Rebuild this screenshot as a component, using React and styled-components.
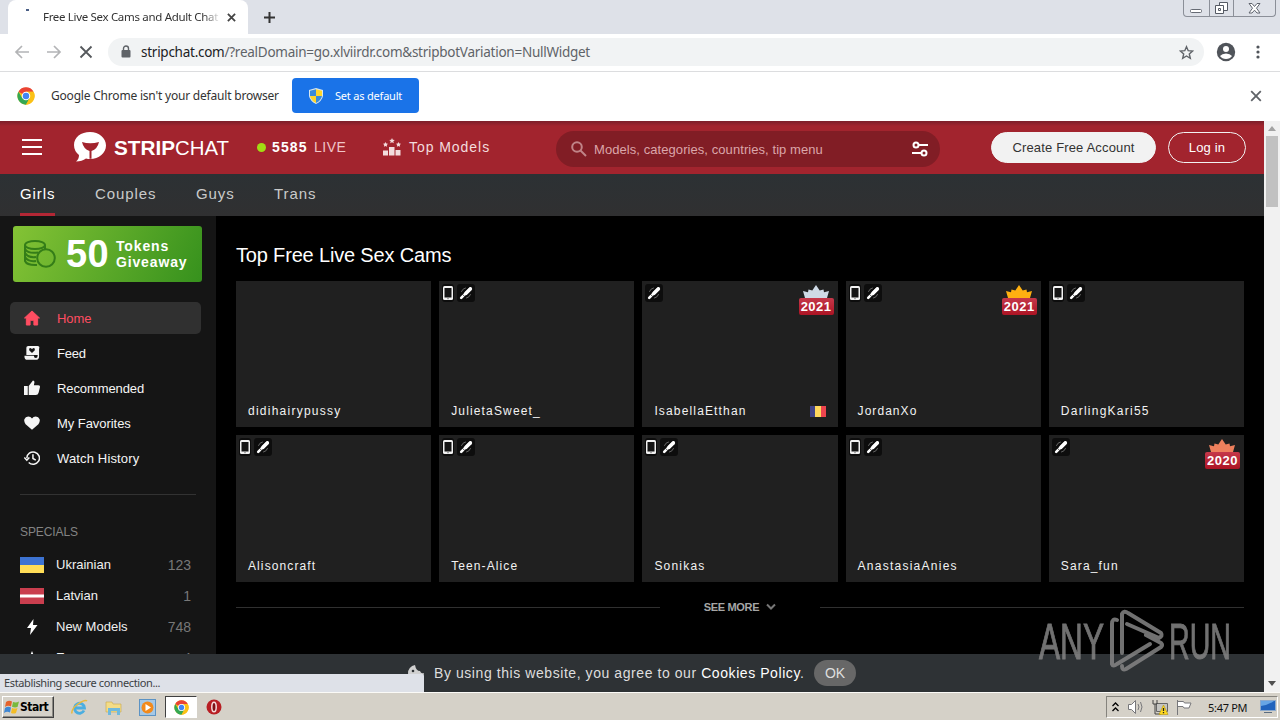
import styled, { createGlobalStyle } from 'styled-components';

const GlobalStyle = createGlobalStyle`
  * {
    box-sizing: border-box;
  }

  body {
    margin: 0;
    overflow: hidden;
  }

  svg {
    display: block;
    flex: none;
  }
`;

const UI_FONT = '"Noto Sans", "DejaVu Sans", sans-serif';
const SITE_FONT = '"Liberation Sans", Arial, sans-serif';

const Screen = styled.div`
  position: relative;
  display: flex;
  flex-direction: column;
  width: 1280px;
  height: 720px;
  overflow: hidden;
  background: #fff;
  font-family: ${UI_FONT};
`;

const Label = styled.span`
  flex: none;
  display: block;
  white-space: nowrap;
  width: ${({ $width }) => ($width ? `${$width}px` : 'auto')};
  margin-left: ${({ $left = 0 }) => $left}px;
  font-size: ${({ $size = 14 }) => $size}px;
  font-weight: ${({ $weight = 400 }) => $weight};
  letter-spacing: ${({ $spacing = 0 }) => $spacing}px;
  color: ${({ $color = '#fff' }) => $color};
`;

/* ---------- browser ---------- */

const TabStrip = styled.div`
  flex: none;
  display: flex;
  height: 34px;
  padding-left: 8px;
  background: #dee1e8;
`;

const Tab = styled.div`
  display: flex;
  align-items: center;
  width: 240px;
  height: 34px;
  background: #fff;
  border-radius: 8px 8px 0 0;
`;

const Spinner = styled.div`
  align-self: flex-start;
  width: 3px;
  height: 2px;
  margin: 9px 0 0 18px;
  background: #4b5f86;
`;

const TabTitle = styled.div`
  width: 176px;
  margin: -1px 0 0 14px;
  white-space: nowrap;
  font-size: 11.5px;
  letter-spacing: -0.32px;
  color: #333;
  mask-image: linear-gradient(to right, #000 160px, transparent 178px);
`;

const NewTab = styled.div`
  display: flex;
  align-items: center;
  margin-left: 15px;
`;

const WindowButtons = styled.div`
  display: flex;
  width: 93px;
  height: 17px;
  margin: 0 4px 0 auto;
  border: 1px solid #8b8f98;
  border-top: 0;
  border-radius: 0 0 4px 4px;
`;

const WindowButton = styled.div`
  display: flex;
  align-items: center;
  justify-content: center;
  width: ${({ $width }) => $width}px;
  border-right: ${({ $last }) => ($last ? 0 : '1px solid #8b8f98')};
`;

const Toolbar = styled.div`
  flex: none;
  display: flex;
  align-items: center;
  height: 38px;
  padding: 0 0 1px 14px;
  border-bottom: 1px solid #dcdddf;
`;

const NavIcons = styled.div`
  display: flex;
  gap: 16px;
`;

const AddressBar = styled.div`
  display: flex;
  align-items: center;
  width: 1096px;
  height: 28px;
  margin: 0 12px 0 14px;
  padding: 0 10px 0 13px;
  border-radius: 14px;
  background: #f1f3f4;
`;

const Url = styled.div`
  margin: -1px auto 0 10px;
  font-size: 13.5px;
  letter-spacing: -0.26px;
  color: #5f6368;

  & b {
    font-weight: 400;
    color: #202124;
  }
`;

const InfoBar = styled.div`
  flex: none;
  display: flex;
  align-items: center;
  height: 49px;
  padding: 0 18px 2px 17px;
`;

const DefaultButton = styled.div`
  display: flex;
  align-items: center;
  width: 127px;
  height: 35px;
  margin: 0 auto 0 12px;
  padding-left: 16px;
  border-radius: 4px;
  background: #1a73e8;
`;

/* ---------- page ---------- */

const Viewport = styled.div`
  position: relative;
  flex: none;
  display: flex;
  height: 571px;
  font-family: ${SITE_FONT};
`;

const Page = styled.div`
  width: 1264px;
  background: #000;
`;

const Header = styled.header`
  display: flex;
  height: 53px;
  padding: 0 18px 1px 22px;
  align-items: center;
  background: linear-gradient(#7b1f2a, #a2242e 5px);
`;

const Dot = styled.i`
  flex: none;
  width: 9px;
  height: 9px;
  margin: 0 6px 0 26px;
  border-radius: 50%;
  background: #a2dc13;
`;

const Search = styled.div`
  flex: none;
  display: flex;
  align-items: center;
  width: 384px;
  height: 36px;
  margin: 4px 0 0 66px;
  padding: 0 12px 0 15px;
  border-radius: 18px;
  background: #811d25;
`;

const Pill = styled.div`
  flex: none;
  display: flex;
  align-items: center;
  justify-content: center;
  white-space: nowrap;
  width: ${({ $width }) => $width}px;
  height: 31px;
  margin-left: ${({ $left }) => $left}px;
  border: 1px solid #f2f2f2;
  border-radius: 16px;
  background: ${({ $filled }) => ($filled ? '#f2f2f2' : 'transparent')};
  color: ${({ $filled }) => ($filled ? '#333' : '#fff')};
  font-size: 13px;
  letter-spacing: 0.15px;
`;

const Tabs = styled.nav`
  display: flex;
  height: 42px;
  padding-left: 20px;
  background: linear-gradient(#2c3134, #303031);
`;

const TabLink = styled.div`
  height: 42px;
  width: ${({ $width }) => $width}px;
  margin-right: 40px;
  border-bottom: 3px solid ${({ $active }) => ($active ? '#b32735' : 'transparent')};
  font-size: 15px;
  line-height: 39px;
  letter-spacing: 0.9px;
  white-space: nowrap;
  color: ${({ $active }) => ($active ? '#fff' : '#c9caca')};
`;

const Columns = styled.div`
  display: flex;
  height: 476px;
`;

const Sidebar = styled.aside`
  width: 216px;
  padding-top: 10px;
  background: #151515;
  overflow: hidden;
`;

const Giveaway = styled.div`
  display: flex;
  align-items: center;
  width: 189px;
  height: 56px;
  margin: 0 0 20px 13px;
  padding-left: 10px;
  border-radius: 3px;
  background: linear-gradient(115deg, #84c335, #36911d);
`;

const GiveawayText = styled.div`
  margin-left: 7px;
  font-size: 14px;
  font-weight: 700;
  line-height: 16px;
  letter-spacing: 0.85px;
  color: #fff;
`;

const MenuItem = styled.div`
  display: flex;
  align-items: center;
  gap: 17px;
  width: 191px;
  height: 32px;
  margin: 0 0 3px 10px;
  padding-left: 14px;
  border-radius: 5px;
  background: ${({ $active }) => ($active ? '#303030' : 'transparent')};
  color: ${({ $active }) => ($active ? '#ff4d61' : '#f5f5f5')};
  font-size: 13px;
  letter-spacing: ${({ $spacing = 0 }) => $spacing}px;
  white-space: nowrap;
`;

const SideRule = styled.div`
  height: 1px;
  margin: 20px 20px 30px;
  background: #323232;
`;

const SpecialsTitle = styled.div`
  height: 16px;
  margin: 0 0 8px 20px;
  font-size: 12px;
  line-height: 15px;
  letter-spacing: -0.1px;
  color: #838383;
`;

const Special = styled.div`
  display: flex;
  align-items: center;
  height: 31px;
  padding: 0 25px 0 20px;
  font-size: 13px;
  white-space: nowrap;
  color: #f0f0f0;

  & em {
    margin-left: auto;
    font-size: 14px;
    font-style: normal;
    color: #787878;
  }
`;

const SpecialIcon = styled.div`
  display: flex;
  justify-content: center;
  width: 24px;
  margin-right: 12px;
`;

const Main = styled.main`
  width: 1048px;
  padding: 25px 20px 0;
`;

const Title = styled.h1`
  height: 28px;
  margin: 0 0 12px;
  font-size: 20px;
  font-weight: 400;
  line-height: 28px;
  letter-spacing: -0.17px;
  color: #fff;
`;

const Grid = styled.div`
  display: grid;
  grid-template-columns: repeat(5, 1fr);
  grid-auto-rows: 146.4px;
  gap: 8px;
`;

const Card = styled.div`
  display: flex;
  flex-direction: column;
  justify-content: space-between;
  background: #202020;
`;

const CardTop = styled.div`
  display: flex;
  justify-content: space-between;
  padding: 3px 4px 0 3px;
`;

const Badges = styled.div`
  display: flex;
  gap: 3px;
`;

const Badge = styled.div`
  display: flex;
  align-items: center;
  justify-content: center;
  width: ${({ $width }) => $width}px;
  height: 18px;
  border-radius: 3px;
  background: #0d0d0d;
`;

const Award = styled.div`
  display: flex;
  flex-direction: column;
  align-items: center;
  margin-top: 1px;
`;

const Year = styled.div`
  width: 35px;
  height: 17px;
  border-radius: 2px;
  background: linear-gradient(#c5384a, #ac1424);
  color: #fff;
  font-size: 13px;
  font-weight: 700;
  line-height: 17px;
  letter-spacing: 0.5px;
  text-align: center;
`;

const CardBottom = styled.div`
  display: flex;
  justify-content: space-between;
  align-items: center;
  height: 16px;
  padding: 0 12px;
  margin-bottom: 8px;
  color: #f2f2f2;
  font-size: 12px;
  letter-spacing: ${({ $spacing = 1 }) => $spacing}px;
`;

const SeeMore = styled.div`
  display: flex;
  align-items: center;
  justify-content: space-between;
  height: 16px;
  margin-top: 17px;
`;

const Rule = styled.div`
  width: 424px;
  height: 1px;
  margin-top: 1px;
  background: #303030;
`;

const SeeMoreLabel = styled.div`
  display: flex;
  align-items: center;
  gap: 7px;
  color: #a6a6a6;
  font-size: 11px;
  font-weight: 700;
  letter-spacing: -0.35px;
`;

const CookieBar = styled.div`
  position: absolute;
  left: 0;
  bottom: 0;
  display: flex;
  align-items: center;
  width: 1264px;
  height: 38px;
  padding-left: 407px;
  background: #2e3235;
  white-space: nowrap;
  font-size: 14px;
  color: #dedede;

  & b {
    font-weight: 400;
    color: #fff;
  }
`;

const OkButton = styled.div`
  width: 42px;
  height: 26px;
  margin-left: 9px;
  border-radius: 13px;
  background: #676767;
  line-height: 26px;
  text-align: center;
`;

const StatusBubble = styled.div`
  position: absolute;
  left: 0;
  bottom: 0;
  width: 424px;
  height: 18px;
  padding-left: 4px;
  border-radius: 0 2px 0 0;
  background: #dee1e8;
  font-family: ${UI_FONT};
  font-size: 11px;
  line-height: 18px;
  letter-spacing: -0.37px;
  color: #3c4043;
`;

const Watermark = styled.svg`
  position: absolute;
  left: 1036px;
  bottom: 16px;
`;

const Scrollbar = styled.div`
  display: flex;
  flex-direction: column;
  align-items: center;
  width: 16px;
  padding: 5px 0 6px;
  background: #f1f1f1;
`;

const Thumb = styled.div`
  width: 12px;
  height: 71px;
  margin: 5px 0 auto;
  background: #c1c1c1;
`;

/* ---------- taskbar ---------- */

const Taskbar = styled.div`
  flex: none;
  display: flex;
  align-items: center;
  height: 28px;
  padding: 1px 2px 0;
  background: #d5d1c8;
  border-top: 1px solid #fbfaf7;
`;

const StartButton = styled.div`
  display: flex;
  align-items: center;
  width: 52px;
  height: 22px;
  padding-left: 1px;
  border: 1px solid;
  border-color: #fff #404040 #404040 #fff;
  box-shadow: inset -1px -1px 0 #8c8a84;
  color: #000;
  font-family: "DejaVu Sans Condensed", "DejaVu Sans", sans-serif;
  font-size: 12px;
  font-weight: 700;
  letter-spacing: -0.5px;
`;

const QuickLaunch = styled.div`
  display: flex;
  align-items: center;
  gap: 17px;
  margin-left: 17px;
`;

const ActiveTask = styled.div`
  display: flex;
  align-items: center;
  justify-content: center;
  width: 32px;
  height: 22px;
  margin: 0 -8px;
  border: 1px solid;
  border-color: #404040 #fff #fff #404040;
  background: #fff;
`;

const Tray = styled.div`
  display: flex;
  align-items: center;
  width: 172px;
  height: 22px;
  margin-left: auto;
  padding-left: 4px;
  border: 1px solid;
  border-color: #85837d #fff #fff #85837d;
`;

const ChromeLogo = ({ size = 17 }) => (
  <svg width={size} height={size} viewBox="0 0 24 24">
    <circle cx="12" cy="12" r="11.5" fill="#fbc116" />
    <path d="M12 12 L2 6.3 A11.5 11.5 0 0 1 22 6.3 L12 6.3Z" fill="#ea4335" />
    <path d="M2 6.3 A11.5 11.5 0 0 0 12 23.5 L17 14.8 L12 12 L7 14.8Z" fill="#34a853" />
    <path d="M22 6.3H12V12L17 14.8L12 23.5A11.5 11.5 0 0 0 22 6.3Z" fill="#fbc116" />
    <circle cx="12" cy="12" r="5.7" fill="#fff" />
    <circle cx="12" cy="12" r="4.3" fill="#4285f4" />
  </svg>
);

const Cross = ({ size = 10, color = '#444', width = 2 }) => (
  <svg width={size} height={size} viewBox="0 0 10 10" stroke={color} strokeWidth={width}>
    <path d="M1 1l8 8M9 1L1 9" />
  </svg>
);

const PhoneIcon = () => (
  <svg width="10" height="14" viewBox="0 0 10 14">
    <rect width="10" height="14" rx="1.5" fill="#f2f2f2" />
    <rect x="1.5" y="2" width="7" height="9.5" fill="#151515" />
    <path d="M4 12.7h2" stroke="#999" />
  </svg>
);

const ToyIcon = () => (
  <svg width="16" height="16" viewBox="0 0 16 16" fill="none" strokeLinecap="round">
    <path d="M3.500 6.500Q4.500 3.500 7.500 3M12.500 9.500Q11.500 12.500 8.500 13" stroke="#666" />
    <path d="M3.200 12.800L12.500 3.500" stroke="#fff" strokeWidth="2.600" />
    <path d="M8 8.300L12.300 4" stroke="#fff" strokeWidth="3.600" />
    <path d="M4.800 9.600L6.500 11.300" stroke="#0d0d0d" strokeWidth=".7" />
  </svg>
);

const Crown = ({ color }) => (
  <svg width="28" height="13" viewBox="0 0 28 13">
    <path d="M3 13L1 6L6 7.300L6.500 4.500L10.300 5.500L14 0L17.700 5.500L21.500 4.500L22 7.300L27 6L25 13Z" fill={color} />
  </svg>
);

const Flag = ({ colors, sizes }) => (
  <svg width="24" height="16" viewBox="0 0 24 16">
    <rect width="24" height="16" fill={colors[0]} />
    <rect y={sizes[0]} width="24" height={sizes[1]} fill={colors[1]} />
  </svg>
);

const MENU_ICONS = {
  Home: <path d="M9 1.500L17 9H15V16.500H11V11.500H7V16.500H3V9H1Z" stroke="currentColor" strokeLinejoin="round" />,
  Feed: (
    <>
      <path d="M3 1.5H15Q17 1.5 17 4H15V11H3V3.5Q3 1.5 5 1.5ZM1 11.8H11Q11 14.2 13 14.2T15 11.8V4H16.5V13Q16.5 16.3 13 16.3H4Q1 16.3 1 13Z" />
      <path d="M9 9L6 6Q5.4 3.6 7.4 3.6L9 4.8L10.6 3.6Q12.6 3.6 12 6Z" fill="#151515" />
    </>
  ),
  Recommended: <path d="M.5 7H4.500V16.500H.5ZM5.500 7L10 1Q12 1.4 11.5 3.5L11 6H15.500Q17.700 6 17.500 8L16 14Q15.500 16.500 13 16.500H5.500Z" />,
  'My Favorites': <path d="M9 16.300L2.200 10.200Q.2 7.600 .9 5Q2 2.200 5 2.200Q7.700 2.200 9 4.200Q10.300 2.200 13 2.200Q16 2.200 17.100 5Q17.800 7.600 15.800 10.200Z" />,
  'Watch History': (
    <path
      d="M3.500 9A6.700 6.500 0 1 1 5.500 13.800M.8 8.500L3.500 11.200L6.200 8.500M10 5V9.500L13 11.300"
      fill="none"
      stroke="currentColor"
      strokeWidth="1.6"
    />
  ),
};

const menu = [
  { name: 'Home', spacing: -0.1 },
  { name: 'Feed', spacing: -0.2 },
  { name: 'Recommended', spacing: -0.1 },
  { name: 'My Favorites', spacing: -0.05 },
  { name: 'Watch History', spacing: 0.15 },
];

const models = [
  { name: 'didihairypussy', spacing: 1.25 },
  { name: 'JulietaSweet_', phone: true, toy: true, spacing: 1.15 },
  { name: 'IsabellaEtthan', toy: true, crown: '#cfdae6', year: 2021, flag: true, spacing: 1.15 },
  { name: 'JordanXo', phone: true, toy: true, crown: '#ffb010', year: 2021, spacing: 1.05 },
  { name: 'DarlingKari55', phone: true, toy: true, spacing: 1.25 },
  { name: 'Alisoncraft', phone: true, toy: true, spacing: 1.1 },
  { name: 'Teen-Alice', phone: true, toy: true, spacing: 1.1 },
  { name: 'Sonikas', phone: true, toy: true, spacing: 1.2 },
  { name: 'AnastasiaAnies', phone: true, toy: true, spacing: 1.25 },
  { name: 'Sara_fun', toy: true, crown: '#ee805d', year: 2020, spacing: 1.15 },
];

const ModelCard = ({ model }) => (
  <Card>
    <CardTop>
      <Badges>
        {model.phone && (
          <Badge $width={12}>
            <PhoneIcon />
          </Badge>
        )}
        {model.toy && (
          <Badge $width={18}>
            <ToyIcon />
          </Badge>
        )}
      </Badges>
      {model.crown && (
        <Award>
          <Crown color={model.crown} />
          <Year>{model.year}</Year>
        </Award>
      )}
    </CardTop>
    <CardBottom $spacing={model.spacing}>
      {model.name}
      {model.flag && (
        <Label $left={4}>
          <svg width="16" height="11" viewBox="0 0 16 11">
            <rect width="6" height="11" fill="#424486" />
            <rect x="5" width="6" height="11" fill="#ffd75d" />
            <rect x="11" width="5" height="11" fill="#ee454e" />
          </svg>
        </Label>
      )}
    </CardBottom>
  </Card>
);

const Browser = () => (
  <>
    <TabStrip>
      <Tab>
        <Spinner />
        <TabTitle>Free Live Sex Cams and Adult Chat (</TabTitle>
        <Label $left={8}>
          <Cross size={9} />
        </Label>
      </Tab>
      <NewTab>
        <svg width="13" height="13" stroke="#333" strokeWidth="2">
          <path d="M6.5 1v11M1 6.5h11" />
        </svg>
      </NewTab>
      <WindowButtons>
        <WindowButton $width={26}>
          <svg width="12" height="16" fill="#fff" stroke="#666b74">
            <rect x=".5" y="9.5" width="11" height="3" rx="1" />
          </svg>
        </WindowButton>
        <WindowButton $width={25}>
          <svg width="13" height="13" fill="#fff" stroke="#555a64">
            <path d="M4.5.5h8v8h-8z" />
            <path d="M.5 3.5h8v8h-8zM3.5 6.5h2v2h-2z" />
          </svg>
        </WindowButton>
        <WindowButton $width={41} $last>
          <svg width="13" height="11" fill="#fff" stroke="#60656f">
            <path d="M1 .5h3l2.5 3L9 .5h3L8.5 5.2l3.5 4.8H9L6.5 7.2 4 10H1l3.5-4.8z" />
          </svg>
        </WindowButton>
      </WindowButtons>
    </TabStrip>

    <Toolbar>
      <NavIcons>
        <svg width="16" height="16" fill="none" stroke="#b3b4b6" strokeWidth="1.7">
          <path d="M15 8H2M8 2L2 8l6 6" />
        </svg>
        <svg width="16" height="16" fill="none" stroke="#b3b4b6" strokeWidth="1.7">
          <path d="M1 8h13M8 2l6 6-6 6" />
        </svg>
        <svg width="16" height="16" fill="none" stroke="#55585c" strokeWidth="1.8">
          <path d="M2.5 2.5l11 11M13.5 2.5l-11 11" />
        </svg>
      </NavIcons>
      <AddressBar>
        <svg width="10" height="14" viewBox="0 0 10 14" fill="#5f6368">
          <path d="M2.5 6V3.5a2.5 2.5 0 0 1 5 0V6" fill="none" stroke="#5f6368" strokeWidth="1.4" />
          <rect x=".5" y="5" width="9" height="7.5" rx="1" />
        </svg>
        <Url>
          <b>stripchat.com</b>/?realDomain=go.xlviirdr.com&amp;stripbotVariation=NullWidget
        </Url>
        <svg width="15" height="15" viewBox="0 0 15 15" fill="none" stroke="#5f6368" strokeWidth="1.4">
          <path d="M7.5 1.7L9.2 5.7L13.6 6.1L10.3 9L11.3 13.3L7.5 11L3.7 13.3L4.7 9L1.4 6.1L5.8 5.7Z" />
        </svg>
      </AddressBar>
      <svg width="20" height="20" viewBox="0 0 20 20">
        <circle cx="10" cy="10" r="9.2" fill="#50545a" />
        <circle cx="10" cy="7" r="3" fill="#fff" />
        <path d="M4 14Q6 11.5 10 11.5T16 14Q14 17 10 17T4 14" fill="#fff" />
      </svg>
      <Label $left={20}>
        <svg width="4" height="14" fill="#50545a">
          <circle cx="2" cy="2" r="1.6" />
          <circle cx="2" cy="7" r="1.6" />
          <circle cx="2" cy="12" r="1.6" />
        </svg>
      </Label>
    </Toolbar>

    <InfoBar>
      <ChromeLogo size={18} />
      <Label $left={16} $width={229} $size={12} $spacing={-0.2} $color="#333">
        Google Chrome isn't your default browser
      </Label>
      <DefaultButton>
        <svg width="16" height="18" viewBox="0 0 16 18">
          <path d="M8 1L15 3V9Q14 14 8 17Q2 14 1 9V3Z" fill="#d8e7ef" />
          <path d="M8 2.2V9H2V3.8Z" fill="#3a8bd9" />
          <path d="M8 2.2V9H14V3.8Z" fill="#ffd629" />
          <path d="M8 9V16Q3 13.5 2 9Z" fill="#ffd629" />
          <path d="M8 9V16Q13 13.5 14 9Z" fill="#3a8bd9" />
        </svg>
        <Label $left={11} $size={11} $spacing={-0.2}>
          Set as default
        </Label>
      </DefaultButton>
      <Cross size={12} color="#5f6368" width={1.5} />
    </InfoBar>
  </>
);

const SiteHeader = () => (
  <Header>
    <svg width="20" height="16" fill="#fff">
      <path d="M0 0h20v2H0zM0 7h20v2H0zM0 14h20v2H0z" />
    </svg>
    <Label $left={31}>
      <svg width="34" height="32" viewBox="0 0 34 32">
        <path d="M17 1C8 1 1 6.300 1 14Q1 20 6 24Q6 28 3 30.500Q9 30.500 13 27.500Q15 28 17 28C26 28 33 22 33 14.500S26 1 17 1Z" fill="#fff" />
        <path d="M9 11Q17 13.500 26 11Q24.500 18 18.500 20V27.700H16.500V20Q10.500 18 9 11Z" fill="#a2242e" />
      </svg>
    </Label>
    <svg width="124" height="26">
      <text x="7" y="21" fill="#fff" fontFamily={SITE_FONT} fontSize="20.5" fontWeight="700" textLength="61" lengthAdjust="spacingAndGlyphs">
        STRIP
      </text>
      <text x="68" y="21" fill="#fff" fontFamily={SITE_FONT} fontSize="20.5" textLength="54" lengthAdjust="spacingAndGlyphs">
        CHAT
      </text>
    </svg>
    <Dot />
    <Label $width={36} $weight={700} $spacing={1.1}>
      5585
    </Label>
    <Label $left={6} $width={32} $spacing={0.5} $color="#f0c5c8">
      LIVE
    </Label>
    <Label $left={37}>
      <svg width="18" height="18" viewBox="0 0 18 18" fill="#f3dcdd">
        <path d="M0 12.5h5v5H0zM6 9h5.500v8.500H6zM12.500 12h5v5.500h-5z" />
        <path d="M9 0l.8 1.800 2 .2-1.500 1.300.5 2L9 4.300l-1.800 1 .5-2L6.200 2l2-.2zM2.500 4l.8 1.600L5 5.800 3.800 7l.3 1.800-1.600-.9-1.600.9L1.200 7 0 5.800l1.700-.2zM15.500 4l.8 1.600 1.700.2L16.800 7l.3 1.800-1.600-.9-1.600.9.3-1.800L13 5.800l1.700-.2z" />
      </svg>
    </Label>
    <Label $left={8} $width={81} $spacing={0.95} $color="#f3dcdd">
      Top Models
    </Label>
    <Search>
      <svg width="16" height="16" fill="none" stroke="#c08488" strokeWidth="2">
        <circle cx="6" cy="6" r="4.800" />
        <path d="M9.500 9.500L15 15" />
      </svg>
      <Label $left={7} $width={318} $size={13} $spacing={0.07} $color="#dba6aa">
        Models, categories, countries, tip menu
      </Label>
      <svg width="16" height="16" fill="none" stroke="#fff" strokeWidth="2">
        <circle cx="4" cy="4" r="2.500" />
        <path d="M6.500 4H16M0 12h9.500" />
        <circle cx="12" cy="12" r="2.500" />
      </svg>
    </Search>
    <Pill $filled $width={165} $left={51}>
      Create Free Account
    </Pill>
    <Pill $width={78} $left={12}>
      Log in
    </Pill>
  </Header>
);

const SiteSidebar = () => (
  <Sidebar>
    <Giveaway>
      <svg width="34" height="30" viewBox="0 0 34 30" fill="none" stroke="#347d18" strokeWidth="2">
        <ellipse cx="12" cy="6" rx="10" ry="4" />
        <path d="M2 6v16q2 4.500 12 4M22 6v4M2 10q3 5 13 3.500M2 14q3 5 11 4M2 18q3 5 11 4" />
        <circle cx="23" cy="19" r="8.800" />
      </svg>
      <Label $left={9} $width={43} $size={38} $weight={700} $spacing={0.3}>
        50
      </Label>
      <GiveawayText>
        Tokens
        <br />
        Giveaway
      </GiveawayText>
    </Giveaway>
    {menu.map(({ name, spacing }) => (
      <MenuItem key={name} $active={name === 'Home'} $spacing={spacing}>
        <svg width="16" height="16" viewBox=".5 .5 17 17" fill="currentColor">
          {MENU_ICONS[name]}
        </svg>
        {name}
      </MenuItem>
    ))}
    <SideRule />
    <SpecialsTitle>SPECIALS</SpecialsTitle>
    <Special>
      <SpecialIcon>
        <Flag colors={['#3d73d2', '#ffdd57']} sizes={[8, 8]} />
      </SpecialIcon>
      Ukrainian<em>123</em>
    </Special>
    <Special>
      <SpecialIcon>
        <Flag colors={['#c93e4e', '#fff']} sizes={[6.5, 3]} />
      </SpecialIcon>
      Latvian<em>1</em>
    </Special>
    <Special>
      <SpecialIcon>
        <svg width="12" height="16" fill="#fff">
          <path d="M7.500 0L1 9h4L4 16l7.500-10H7z" />
        </svg>
      </SpecialIcon>
      New Models<em>748</em>
    </Special>
    <Special>
      <SpecialIcon>
        <svg width="14" height="14" fill="#fff">
          <path d="M7 0l2 5h5l-4 3 2 6-5-4-5 4 2-6-4-3h5z" />
        </svg>
      </SpecialIcon>
      Ews<em>4</em>
    </Special>
  </Sidebar>
);

const SiteWatermark = () => (
  <Watermark width="198" height="68" fill="#858585" opacity=".85">
    <g
      fontFamily='"Liberation Sans Narrow", "Liberation Sans", sans-serif'
      fontSize="50"
      stroke="#858585"
      strokeWidth="1"
    >
      <text x="3" y="51" textLength="65" lengthAdjust="spacingAndGlyphs">ANY</text>
      <text x="133" y="51" textLength="62" lengthAdjust="spacingAndGlyphs">RUN</text>
    </g>
    <g fill="none" stroke="#858585" strokeWidth="4" strokeLinejoin="round" strokeLinecap="round">
      <path d="M81 12Q76 10 76 16V56Q77 59 81 56L114 36" />
      <path d="M86 45V6Q88 2 92 5L125 25Q127 28 123 30L91 16" />
      <path d="M110 27L125 35Q127 37 125 39L90 61Q86 63 86 58" />
    </g>
  </Watermark>
);

const TaskbarIcons = () => (
  <QuickLaunch>
    <svg width="17" height="17" viewBox="0 0 17 17" fill="none">
      <path d="M4 9h9.500A5 5 0 1 0 13 11.500" stroke="#4baee0" strokeWidth="2.800" />
      <path d="M1 14.500Q0 10 7 5T16 2" stroke="#e9b93d" strokeWidth="1.500" />
    </svg>
    <svg width="17" height="17" viewBox="0 0 17 17">
      <path d="M1 3h6l1 2h8v8H1z" fill="#f3dc87" stroke="#c9a84c" strokeWidth=".6" />
      <path d="M3 9h12v7h-3v-4H6v4H3z" fill="#6fb9dd" />
    </svg>
    <svg width="17" height="17" viewBox="0 0 17 17">
      <rect x=".5" y=".5" width="16" height="16" fill="#a5c8e6" stroke="#5c93c4" />
      <circle cx="8.500" cy="8.500" r="6" fill="#f28a1c" />
      <path d="M6.500 5l5.500 3.500-5.500 3.500z" fill="#fff" />
    </svg>
    <ActiveTask>
      <ChromeLogo size={15} />
    </ActiveTask>
    <svg width="16" height="16" viewBox="0 0 16 16">
      <circle cx="8" cy="8" r="7.500" fill="#b81e23" />
      <ellipse cx="8" cy="8" rx="2.200" ry="4.800" fill="#7f1014" stroke="#f5dddd" strokeWidth="1.500" />
    </svg>
  </QuickLaunch>
);

const SystemTray = () => (
  <Tray>
    <svg width="9" height="12" fill="none" stroke="#000" strokeWidth="1.300">
      <path d="M1.500 5L4.500 2l3 3M1.500 10l3-3 3 3" />
    </svg>
    <Label $left={7}>
      <svg width="18" height="16" fill="#fff" stroke="#77777a">
        <path d="M1.500 5.500h3l4-4v13l-4-4h-3z" />
        <path d="M11 5q2 3 0 6M13.500 3q3 5 0 10" fill="none" />
      </svg>
    </Label>
    <Label $left={7}>
      <svg width="17" height="16">
        <path d="M4.500 4.500h11v8h-11z" fill="#c5c5c2" stroke="#666" />
        <path d="M1 1v4h4V1M3 5v10h6" fill="none" stroke="#444" />
        <path d="M11.500 6l4.500 9.500H7z" fill="#ffd91f" stroke="#b5950a" strokeWidth=".6" />
        <path d="M11.500 9v3M11.500 13v1.300" stroke="#222" strokeWidth="1.300" />
      </svg>
    </Label>
    <Label $left={7}>
      <svg width="16" height="16" fill="#fff" stroke="#77777a">
        <path d="M1.500 1v15M1.500 2.500h6l1 1.500h6.500l-2 5H8l-1-1.500H1.500z" />
      </svg>
    </Label>
    <Label $left={16} $width={43} $size={11} $spacing={-0.3} $color="#111">
      5:47 PM
    </Label>
    <Label $left={9}>
      <svg width="16" height="14">
        <rect x=".5" y=".5" width="15" height="10" fill="#2163bd" stroke="#8ca9cc" />
        <path d="M1 6Q8 5 14 1H1z" fill="#67a5e5" />
        <path d="M4 12h8v1H4z" fill="#5a6c80" />
      </svg>
    </Label>
  </Tray>
);

const App = () => {
  return (
    <Screen>
      <GlobalStyle />
      <Browser />
      <Viewport>
        <Page>
          <SiteHeader />
          <Tabs>
            <TabLink $active $width={35}>Girls</TabLink>
            <TabLink $width={61}>Couples</TabLink>
            <TabLink $width={38}>Guys</TabLink>
            <TabLink $width={42}>Trans</TabLink>
          </Tabs>
          <Columns>
            <SiteSidebar />
            <Main>
              <Title>Top Free Live Sex Cams</Title>
              <Grid>
                {models.map((model) => (
                  <ModelCard key={model.name} model={model} />
                ))}
              </Grid>
              <SeeMore>
                <Rule />
                <SeeMoreLabel>
                  SEE MORE
                  <svg width="10" height="8" fill="none" stroke="#777" strokeWidth="2">
                    <path d="M1 1.500l4 4 4-4" />
                  </svg>
                </SeeMoreLabel>
                <Rule />
              </SeeMore>
            </Main>
          </Columns>
        </Page>
        <Scrollbar>
          <svg width="8" height="5" fill="#a3a3a3">
            <path d="M4 0l4 5H0z" />
          </svg>
          <Thumb />
          <svg width="8" height="5" fill="#505050">
            <path d="M4 5l4-5H0z" />
          </svg>
        </Scrollbar>
        <CookieBar>
          <svg width="18" height="18" viewBox="0 0 18 18">
            <path d="M8 1A8 8 0 1 0 17 9Q14 10 13 7Q9 7 8 1Z" fill="#d0d0d0" />
            <circle cx="6" cy="7" r="1.300" fill="#2e3235" />
          </svg>
          <Label $left={9} $width={371} $spacing={0.57} $color="#dedede">
            By using this website, you agree to our <b>Cookies Policy</b>.
          </Label>
          <OkButton>OK</OkButton>
        </CookieBar>
        <SiteWatermark />
        <StatusBubble>Establishing secure connection...</StatusBubble>
      </Viewport>
      <Taskbar>
        <StartButton>
          <svg width="16" height="16" viewBox="0 0 16 16">
            <path d="M2 3Q5 1 8 2.500L7 7.500Q4 6 1 8Z" fill="#e5622b" />
            <path d="M9 3Q12 4 15 2.500L13.500 8Q11 9 8 7.800Z" fill="#79b93b" />
            <path d="M1 9Q4 7 7 8.500L6 13.500Q3 12 0 14Z" fill="#3f87d3" />
            <path d="M8 9Q11 10 13.500 9L12 14Q10 15 7 14Z" fill="#f3bd26" />
          </svg>
          Start
        </StartButton>
        <TaskbarIcons />
        <SystemTray />
      </Taskbar>
    </Screen>
  );
};

export default App;
